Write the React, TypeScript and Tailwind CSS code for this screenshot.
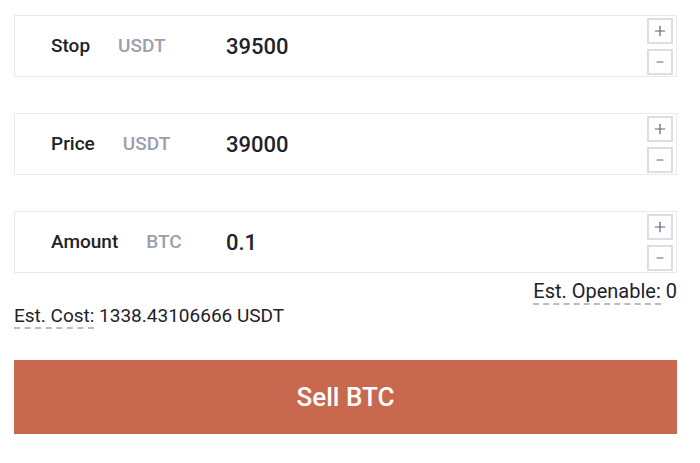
import { Plus, Minus } from "lucide-react";

const rows = [
  { label: "Stop", unit: "USDT", value: "39500" },
  { label: "Price", unit: "USDT", value: "39000" },
  { label: "Amount", unit: "BTC", value: "0.1" },
];

const Stepper = () => (
  <div className="flex flex-col gap-[5px] pr-[3px]">
    <button className="w-[26px] h-[26px] border-2 border-[#dcdde5] flex items-center justify-center text-[#5f6475]">
      <Plus size={16} strokeWidth={1.8} />
    </button>
    <button className="w-[26px] h-[26px] border-2 border-[#dcdde5] flex items-center justify-center text-[#5f6475]">
      <Minus size={10} strokeWidth={2.8} />
    </button>
  </div>
);

const InputRow = ({ label, unit, value }: { label: string; unit: string; value: string }) => (
  <div className="h-[62px] border border-[#e8eaee] flex items-center">
    <div className="w-[211px] pl-[36px] flex items-center gap-[28px] shrink-0">
      <span className="text-[19px] font-medium text-[#1e2329]">{label}</span>
      <span className="text-[19px] font-medium text-[#9aa0ac]">{unit}</span>
    </div>
    <div className="flex-1 text-[22px] font-medium text-[#1e2329]">{value}</div>
    <Stepper />
  </div>
);

export default function App() {
  return (
    <div className="w-[700px] h-[463px] bg-white px-[14px] pt-[15px] pr-[23px]" style={{ fontFamily: "Roboto, 'Noto Sans', sans-serif" }}>
      <div className="flex flex-col gap-[36px]">
        {rows.map((r) => (
          <InputRow key={r.label} {...r} />
        ))}
      </div>
      <div className="flex justify-end mt-[7px]">
        <span className="text-[20px] text-[#1e2329] leading-[22px]">
          <span className="border-b-2 border-dashed border-[#b7bdc6]">Est. Openable:</span> 0
        </span>
      </div>
      <div className="mt-[3px]">
        <span className="text-[19px] text-[#1e2329] leading-[22px]">
          <span className="border-b-2 border-dashed border-[#b7bdc6]">Est. Cost:</span> 1338.43106666 USDT
        </span>
      </div>
      <button className="mt-[31px] w-full h-[74px] bg-[#c8684f] text-white text-[26px] font-medium flex items-center justify-center">
        Sell BTC
      </button>
    </div>
  );
}
